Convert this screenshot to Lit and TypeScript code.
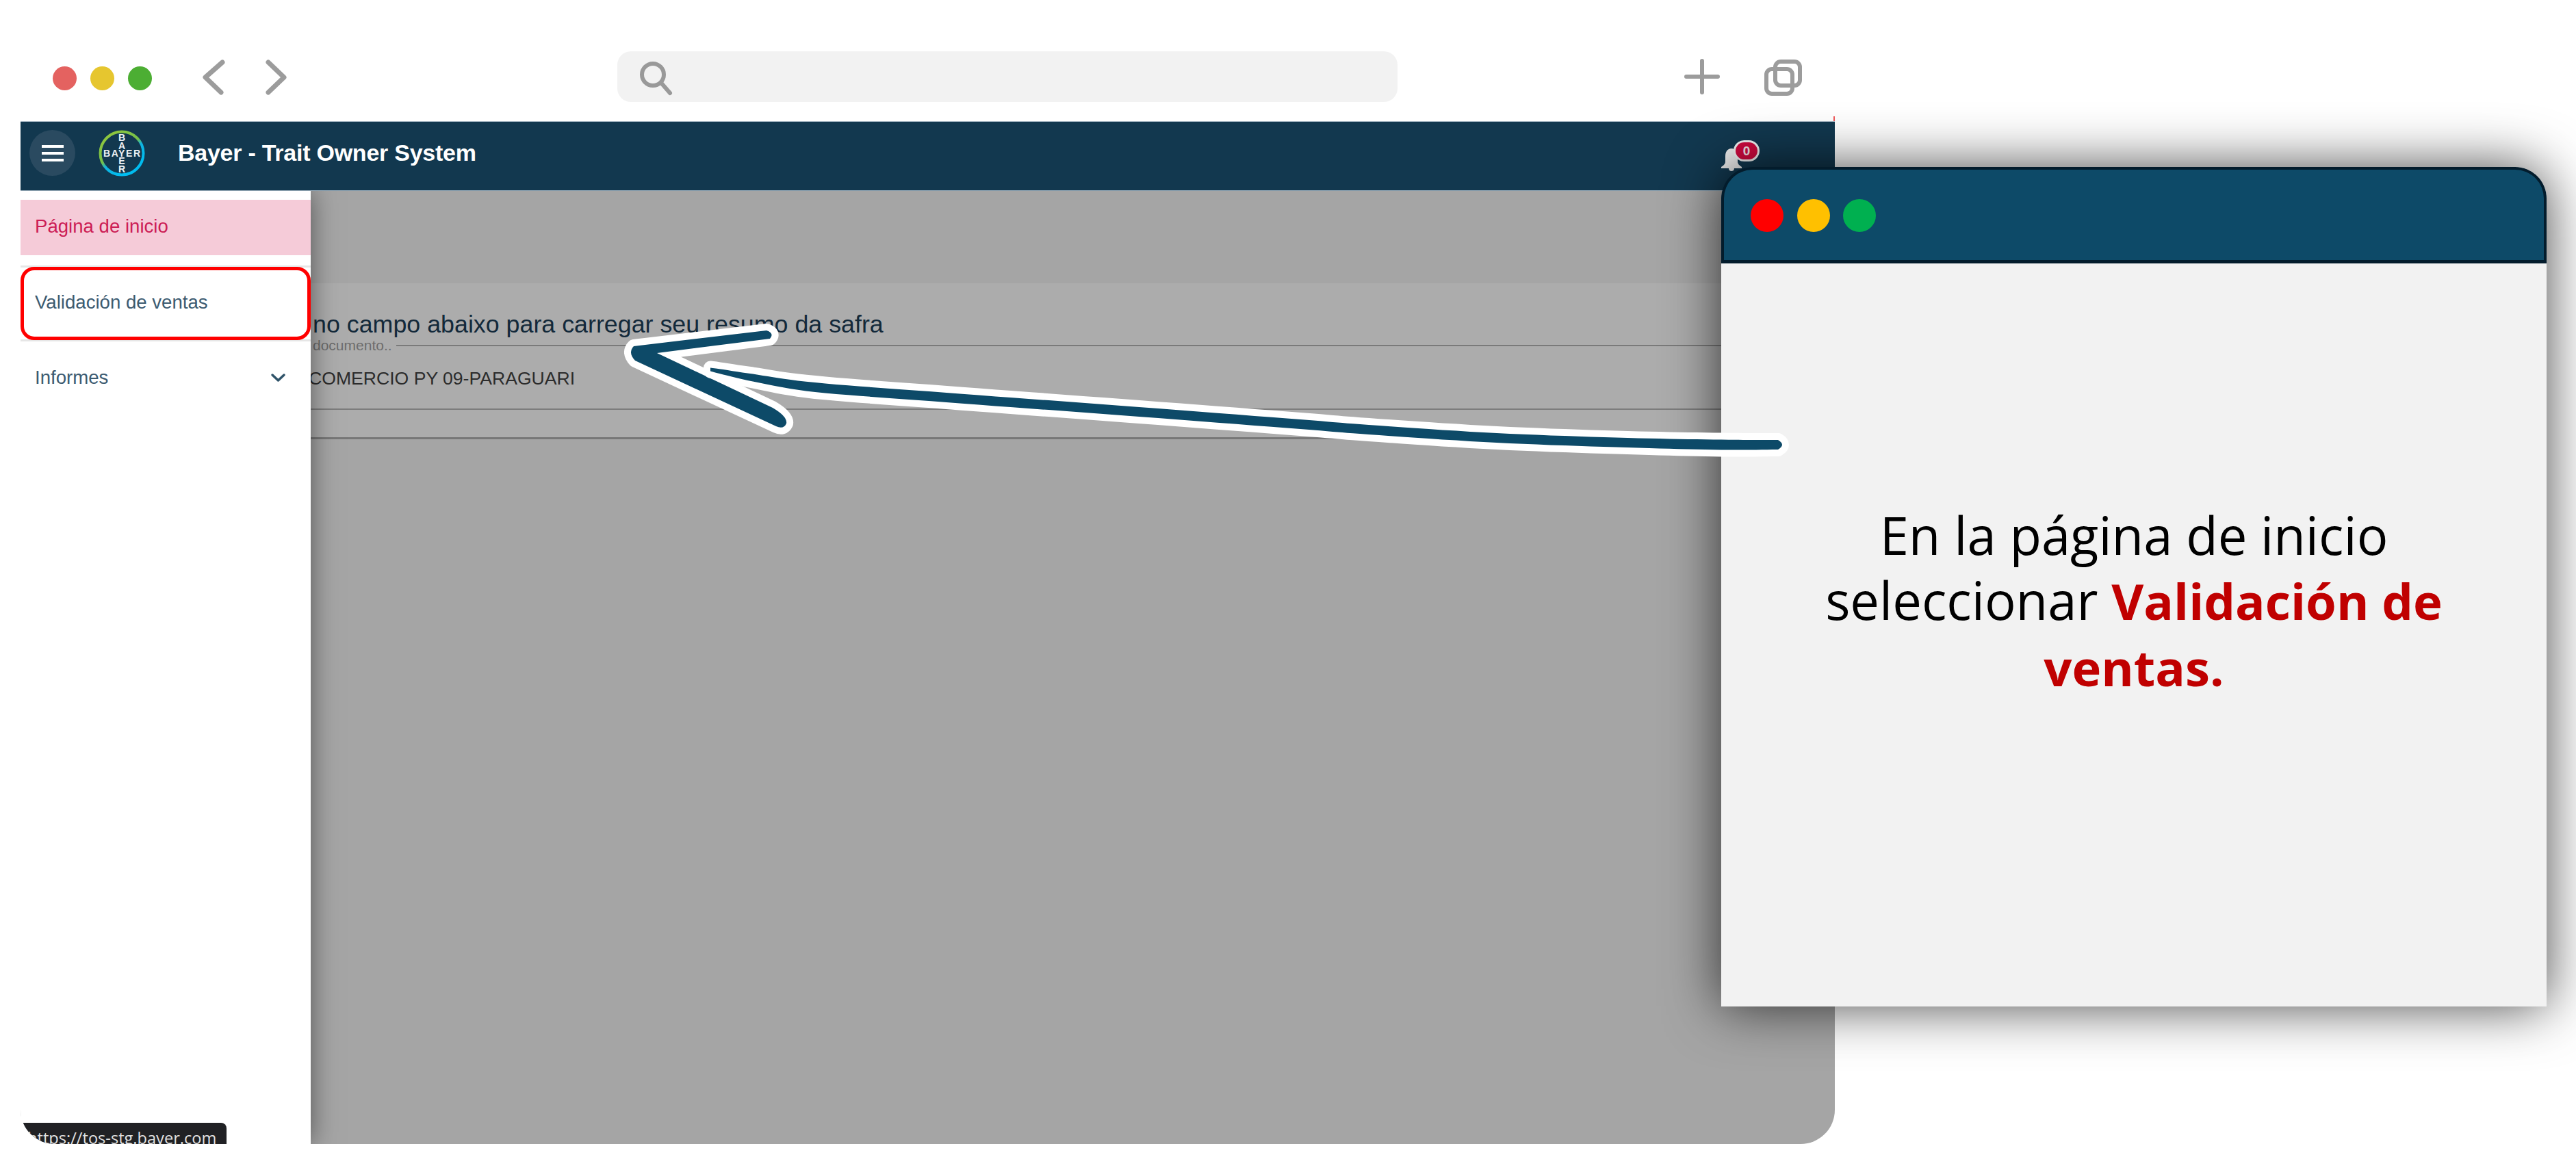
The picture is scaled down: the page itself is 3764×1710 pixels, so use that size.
import { LitElement, html, css, svg } from "lit";
import { customElement } from "lit/decorators.js";

const sans = css`"Liberation Sans", Arial, sans-serif`;

const HEAD =
  "M1120 483 Q1132 487 1125 495 L960 516 L1129 596 Q1151 609 1149 619 Q1145 628 1134 623 L928 527 Q917 515 926 506 Z";

/* Shaft centre line: x, y, half thickness. Sampled as a Catmull-Rom curve into a tapered outline. */
const SHAFT_POINTS: [number, number, number][] = [
  [1038, 540, 2.5], [1100, 552, 5.5], [1191, 566, 7], [1383, 581, 7], [1638, 600, 7],
  [1900, 620, 7], [2000, 628, 7], [2187, 640, 7], [2378, 647, 7], [2515, 650, 7.5], [2600, 650, 7],
];

function shaftPath(): string {
  const p = SHAFT_POINTS;
  const top: string[] = [];
  const bottom: string[] = [];
  const cr = (a: number, b: number, c: number, d: number, t: number) =>
    0.5 * (2 * b + (c - a) * t + (2 * a - 5 * b + 4 * c - d) * t * t + (3 * b - a - 3 * c + d) * t * t * t);
  for (let i = 0; i < p.length - 1; i++) {
    const p0 = p[Math.max(0, i - 1)], p1 = p[i], p2 = p[i + 1], p3 = p[Math.min(p.length - 1, i + 2)];
    for (let s = 0; s < 10; s++) {
      const t = s / 10;
      const x = cr(p0[0], p1[0], p2[0], p3[0], t);
      const y = cr(p0[1], p1[1], p2[1], p3[1], t);
      const w = p1[2] + (p2[2] - p1[2]) * t;
      top.push(`${x.toFixed(1)} ${(y - w).toFixed(1)}`);
      bottom.unshift(`${x.toFixed(1)} ${(y + w).toFixed(1)}`);
    }
  }
  return `M${top.join(" L")} L2598 643 Q2610 650 2598 657 L${bottom.join(" L")} Z`;
}

@customElement("app-root")
export class AppRoot extends LitElement {
  static styles = css`
    :host { display: block; width: 3764px; height: 1710px; background: #fff; font-family: ${sans}; }
    * { box-sizing: border-box; }
    .page { position: relative; width: 3764px; height: 1710px; overflow: hidden; display: flex; flex-direction: column; padding: 0 0 38px 30px; }
    .chrome { height: 177px; flex: none; width: 2651px; display: flex; align-items: center; padding-top: 53px; position: relative; }
    .chrome > * { flex: none; }
    .lights { display: flex; gap: 20px; margin-left: 47px; height: 35px; margin-top: -2px; }
    .light { width: 35px; height: 35px; border-radius: 50%; }
    .nav { margin-left: 70px; display: block; margin-top: -4px; }
    .search { width: 1140px; height: 74px; margin-left: 470px; border-radius: 20px; background: #f2f2f2; display: flex; align-items: center; padding-left: 30px; margin-top: -7px; }
    .plus { display: block; margin-left: 419px; margin-top: -6px; }
    .copy { display: block; margin-left: 65px; }
    .tick { position: absolute; right: 0; bottom: 0; width: 2px; height: 7px; background: #f0585a; }

    .frame { flex: 1; width: 2651px; display: flex; flex-direction: column; overflow: hidden; border-radius: 0 0 50px 50px; }
    .topbar { height: 102px; flex: none; background: #12384f; border-top: 1px solid #aebdc9; border-bottom: 1px solid #8ea2b0; display: flex; align-items: center; padding-bottom: 9px; position: relative; z-index: 3; }
    .burger { width: 67px; height: 67px; border-radius: 50%; background: #2a4a60; margin-left: 13px; display: flex; flex-direction: column; justify-content: center; align-items: center; gap: 6px; }
    .burger i { display: block; width: 32px; height: 4px; background: #fff; }
    .logo { display: block; margin-left: 34px; }
    .logo text { font-family: ${sans}; fill: #eef2f5; font-weight: 700; }
    .title { margin-left: 48px; color: #fff; font-size: 34px; font-weight: 700; letter-spacing: -0.25px; white-space: nowrap; }
    .bell { position: absolute; left: 2485px; top: 38px; display: block; }
    .badge { position: absolute; left: 2503px; top: 27px; width: 38px; height: 31px; border-radius: 16px; background: #cf0a3f; border: 3px solid #f2f2f2; color: #f4e4e8; font-size: 19px; font-weight: 700; display: flex; align-items: center; justify-content: center; }

    .body { flex: 1; display: flex; min-height: 0; }
    .side { width: 424px; flex: none; background: #fff; position: relative; z-index: 2; box-shadow: 0 0 36px rgba(0,0,0,.5); padding-top: 13px; display: flex; flex-direction: column; }
    .item { display: flex; align-items: center; justify-content: space-between; padding: 0 36px 4px 21px; font-size: 27.6px; color: #3c5b71; white-space: nowrap; }
    .item.home { height: 81px; background: #f5cbd8; color: #cc1d55; }
    .rule { height: 3px; background: #e6e6e6; flex: none; }
    .item.sales { height: 107px; border: 5px solid #ff0000; border-radius: 20px; padding-left: 16px; margin: -1px 0; position: relative; background: #fff; }
    .item.reports { height: 110px; }
    .tip { position: absolute; left: 4px; bottom: -8px; width: 297px; height: 39px; background: #202124; border-radius: 0 8px 0 0; color: #e0e0e0; font-family: "Open Sans", sans-serif; font-size: 23.6px; line-height: 44px; padding-left: 6px; white-space: nowrap; overflow: hidden; }

    .main { flex: 1; min-width: 0; background: #a5a5a5; overflow: hidden; padding-top: 135px; display: flex; flex-direction: column; }
    .card { height: 228px; background: #acacac; padding-top: 40px; border-bottom: 3px solid #777; flex: none; display: flex; flex-direction: column; }
    .heading { margin-left: 3px; font-size: 35.8px; line-height: 40px; color: #13293a; white-space: nowrap; }
    .field { display: flex; align-items: center; gap: 6px; height: 20px; margin-left: 3px; margin-top: 1px; font-size: 21px; color: #6c6c6c; white-space: nowrap; }
    .field::after { content: ""; flex: 1; height: 2px; background: #7a7a7a; }
    .value { margin-left: -3px; font-size: 26.6px; line-height: 34px; margin-top: 21px; color: #2c2c2c; white-space: nowrap; }
    .line { height: 2px; background: #7d7d7d; margin-top: 27px; flex: none; }

    .popup { position: absolute; left: 2515px; top: 244px; width: 1206px; height: 1227px; display: flex; flex-direction: column; box-shadow: 0 0 80px rgba(0,0,0,.72); border-radius: 46px 46px 0 0; z-index: 5; }
    .phead { height: 141px; flex: none; background: #0d4a68; border: 4px solid #031c2c; border-radius: 46px 46px 0 0; display: flex; align-items: center; gap: 19.5px; padding: 2px 0 0 39px; border-bottom-width: 5px; }
    .phead i { display: block; width: 48px; height: 48px; border-radius: 50%; }
    .pbody { flex: 1; background: #f2f2f2; display: flex; justify-content: center; padding: 349px 60px 0; }
    .pbody p { margin: 0; text-align: center; font-family: "Open Sans", sans-serif; font-size: 76px; line-height: 95px; color: #000; }
    .pbody b { color: #c00000; font-weight: 700; font-size: 72.4px; }
    .arrow { position: absolute; left: 0; top: 0; z-index: 6; display: block; pointer-events: none; }
    .arrow path { fill: #0d4a68; stroke: #fff; stroke-width: 20px; stroke-linejoin: round; paint-order: stroke; }
  `;

  private logo() {
    const v: [string, number][] = [["B", 16.3], ["A", 27.6], ["E", 50.3], ["R", 61.6]];
    return html`<svg class="logo" width="68" height="68" viewBox="0 0 68 68">
      <defs><linearGradient id="ring" x1="0.2" y1="0.1" x2="0.7" y2="0.85">
        <stop offset="0" stop-color="#8cc63f"/><stop offset=".48" stop-color="#74c04a"/>
        <stop offset=".62" stop-color="#10b4e0"/><stop offset="1" stop-color="#00bcf0"/>
      </linearGradient></defs>
      <circle cx="34" cy="34" r="31.5" fill="none" stroke="url(#ring)" stroke-width="4"/>
      ${v.map(([c, y]) => svg`<text x="34" y="${y}" font-size="14" text-anchor="middle">${c}</text>`)}
      <text x="34" y="39" font-size="14" text-anchor="middle" textLength="54" lengthAdjust="spacing">BAYER</text>
    </svg>`;
  }

  render() {
    return html`<div class="page">
      <div class="chrome">
        <div class="lights">
          <span class="light" style="background:#e46260"></span>
          <span class="light" style="background:#e6c62f"></span>
          <span class="light" style="background:#4cae33"></span>
        </div>
        <svg class="nav" width="140" height="60" viewBox="0 0 140 60" fill="none" stroke="#9c9c9c" stroke-width="7" stroke-linecap="round" stroke-linejoin="round">
          <path d="M33 8 L8 30 L31 52"/><path d="M100 8 L123 30 L100 52"/>
        </svg>
        <div class="search">
          <svg width="70" height="66" viewBox="0 0 70 66" fill="none" stroke="#999" stroke-width="6" stroke-linecap="round">
            <circle cx="22" cy="30" r="16"/><path d="M34 42 L47 57"/>
          </svg>
        </div>
        <svg class="plus" width="52" height="52" viewBox="0 0 52 52" fill="none" stroke="#9c9c9c" stroke-width="6" stroke-linecap="round"><path d="M26 3 V49 M3 26 H49"/></svg>
        <svg class="copy" width="58" height="56" viewBox="0 0 58 56" fill="none" stroke="#9c9c9c" stroke-width="6"><rect x="16" y="3" width="36" height="35" rx="8"/><rect x="3" y="14" width="38" height="36" rx="8"/></svg>
        <span class="tick"></span>
      </div>
      <div class="frame">
        <div class="topbar">
          <div class="burger"><i></i><i></i><i></i></div>
          ${this.logo()}
          <div class="title">Bayer - Trait Owner System</div>
          <svg class="bell" width="30" height="34" viewBox="0 0 30 34"><path fill="#ececec" d="M15 1 C9 1 6 6 6 12 V20 C6 24 3 26 0 28 V30 H30 V28 C27 26 24 24 24 20 V12 C24 6 21 1 15 1 Z M11 30 C11 33 13 34 15 34 C17 34 19 33 19 30 Z"/></svg>
          <div class="badge">0</div>
        </div>
        <div class="body">
          <nav class="side">
            <div class="item home">Página de inicio</div>
            <div class="rule" style="margin-top:15px"></div>
            <div class="item sales">Validación de ventas</div>
            <div class="rule"></div>
            <div class="item reports">Informes
              <svg width="23" height="15" viewBox="0 0 23 15" fill="none" stroke="#2f5369" stroke-width="3.5" stroke-linecap="round" stroke-linejoin="round"><path d="M3 3 L11.5 11 L20 3"/></svg>
            </div>
            <div class="tip">https://tos-stg.bayer.com</div>
          </nav>
          <main class="main">
            <section class="card">
              <div class="heading">no campo abaixo para carregar seu resumo da safra</div>
              <div class="field">documento..</div>
              <div class="value">COMERCIO PY 09-PARAGUARI</div>
              <div class="line"></div>
            </section>
          </main>
        </div>
      </div>
      <aside class="popup">
        <div class="phead">
          <i style="background:#ff0000"></i><i style="background:#ffc000"></i><i style="background:#00b050"></i>
        </div>
        <div class="pbody"><p>En la página de inicio seleccionar <b>Validación de ventas.</b></p></div>
      </aside>
      <svg class="arrow" width="3764" height="1710" viewBox="0 0 3764 1710">
        <path d="${HEAD}"/>
        <path d="${shaftPath()}"/>
      </svg>
    </div>`;
  }
}
